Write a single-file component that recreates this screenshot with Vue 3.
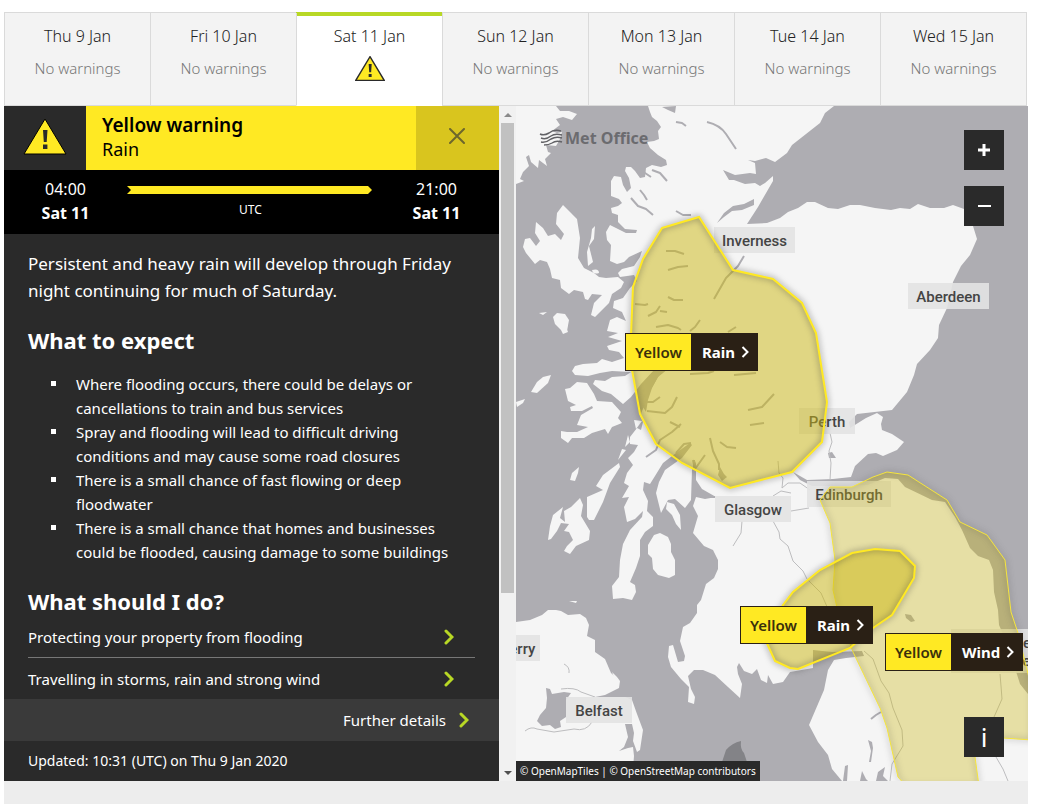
<!-- WarningsView.vue -->
<template>
  <div class="page">
    <nav class="tabs">
      <button
        v-for="(day, i) in days"
        :key="day"
        type="button"
        class="tab"
        :class="{ active: i === activeDay }"
        @click="activeDay = i"
      >
        <span class="tab-date">{{ day }}</span>
        <svg v-if="i === 2" class="tab-icon" viewBox="0 0 44 37">
          <path d="M22 1 L43 36 H1 Z" fill="#ffe923" stroke="#2a2a2a" stroke-width="2" />
          <path d="M20 12h4.500l-.8 12h-2.900z M20 26.500h4.400v4.500h-4.400z" fill="#2a2a2a" />
        </svg>
        <span v-else class="tab-status">No warnings</span>
      </button>
    </nav>

    <main class="content">
      <section class="panel">
        <header class="panel-head">
          <div class="head-icon">
            <svg viewBox="0 0 44 37" width="44" height="37">
              <path d="M22 1 L43 36 H1 Z" fill="#ffe923" stroke="#000" stroke-width="1" />
              <path d="M20 12h4.500l-.8 12h-2.900z M20 26.500h4.400v4.500h-4.400z" fill="#2a2a2a" />
            </svg>
          </div>
          <div class="head-title">
            <h1>Yellow warning</h1>
            <p>Rain</p>
          </div>
          <button type="button" class="close" aria-label="Close">
            <svg viewBox="0 0 16 16" width="16" height="16">
              <path d="M1 1 L15 15 M15 1 L1 15" stroke="#6d672c" stroke-width="2" stroke-linecap="round" />
            </svg>
          </button>
        </header>

        <div class="times">
          <p class="time">04:00<br><strong>Sat 11</strong></p>
          <div class="duration">
            <div class="arrow"></div>
            <span>UTC</span>
          </div>
          <p class="time">21:00<br><strong>Sat 11</strong></p>
        </div>

        <div class="details">
          <p class="summary">
            Persistent and heavy rain will develop through Friday night continuing for much of Saturday.
          </p>
          <h2>What to expect</h2>
          <ul class="impacts">
            <li v-for="impact in impacts" :key="impact">{{ impact }}</li>
          </ul>
          <h2>What should I do?</h2>
          <a v-for="link in links" :key="link" href="#" class="advice">
            {{ link }}
            <svg viewBox="0 0 10 16" width="10" height="16">
              <path d="M2 2 L8 8 L2 14" class="chevron" />
            </svg>
          </a>
        </div>

        <a href="#" class="further">
          Further details
          <svg viewBox="0 0 10 16" width="10" height="16">
            <path d="M2 2 L8 8 L2 14" class="chevron" />
          </svg>
        </a>
        <p class="updated">Updated: 10:31 (UTC) on Thu 9 Jan 2020</p>
      </section>

      <div class="scrollbar">
        <span class="scroll-up"></span>
        <span class="scroll-thumb"></span>
        <span class="scroll-down"></span>
      </div>

      <section class="map">
        <svg class="map-svg" viewBox="516 106 512 675" preserveAspectRatio="xMinYMin slice">
          <rect x="516" y="106" width="512" height="675" fill="#aeadb2" />
          <path v-for="(d, i) in land" :key="'land' + i" :d="d" fill="#f5f5f5" />
          <path v-for="(d, i) in water" :key="'water' + i" :d="d" fill="#aeadb2" />
          <path v-for="(d, i) in lochs" :key="'loch' + i" :d="d" class="loch" />
          <path v-for="(d, i) in roads" :key="'road' + i" :d="d" class="road" />
          <path d="M722 762 L726 750 Q732 743 741 741 Q740 749 744 753 L747 762 Z" fill="#838387" />

          <!-- logo -->
          <g class="logo-waves">
            <path d="M540 134 q4 2 9 -1 q5 -4 12 -2" />
            <path d="M541 138 q5 2 10 -2 q4 -3 11 -1" />
            <path d="M541 142 q5 1 10 -3 q5 -3 11 -1" />
            <path d="M544 145 q5 0 8 -2 q4 -3 10 -1" />
          </g>
          <text x="565" y="144" class="logo-text">Met Office</text>

          <g v-for="place in places" :key="place.lines[0]">
            <rect :x="place.x" :y="place.y" :width="place.w" :height="8 + place.lines.length * 18" class="place-box" />
            <text
              v-for="(line, i) in place.lines"
              :key="line"
              :x="place.x + place.w / 2"
              :y="place.y + 19 + i * 18"
              class="place-name"
            >{{ line }}</text>
          </g>

          <g v-for="area in areas" :key="area.id">
            <path :d="area.d" class="area-fill" :class="area.id" />
            <path :d="area.d" class="area-line" :class="area.id" />
          </g>
        </svg>

        <button
          v-for="pin in pins"
          :key="pin.id"
          type="button"
          class="pin"
          :class="pin.id"
        >
          <span class="pin-level">Yellow</span>
          <span class="pin-type">
            {{ pin.type }}
            <svg viewBox="0 0 8 12" width="8" height="12">
              <path d="M1.500 1 L6.500 6 L1.500 11" fill="none" stroke="#fff" stroke-width="2" />
            </svg>
          </span>
        </button>

        <div class="zoom">
          <button type="button" class="control" aria-label="Zoom in">
            <svg viewBox="0 0 14 14" width="14" height="14">
              <path d="M7 1 V13 M1 7 H13" stroke="#fff" stroke-width="3" />
            </svg>
          </button>
          <button type="button" class="control" aria-label="Zoom out">
            <svg viewBox="0 0 14 14" width="14" height="14">
              <path d="M1 7 H14" stroke="#fff" stroke-width="2" />
            </svg>
          </button>
        </div>
        <button type="button" class="control info">i</button>
        <p class="attribution">© OpenMapTiles | © OpenStreetMap contributors</p>
      </section>
    </main>
    <div class="page-foot"></div>
  </div>
</template>

<script setup>
import { ref } from 'vue'

const activeDay = ref(2)

const days = ['Thu 9 Jan', 'Fri 10 Jan', 'Sat 11 Jan', 'Sun 12 Jan', 'Mon 13 Jan', 'Tue 14 Jan', 'Wed 15 Jan']

const impacts = [
  'Where flooding occurs, there could be delays or cancellations to train and bus services',
  'Spray and flooding will lead to difficult driving conditions and may cause some road closures',
  'There is a small chance of fast flowing or deep floodwater',
  'There is a small chance that homes and businesses could be flooded, causing damage to some buildings',
]

const links = ['Protecting your property from flooding', 'Travelling in storms, rain and strong wind']

const pins = [
  { id: 'rain-north', type: 'Rain' },
  { id: 'rain-south', type: 'Rain' },
  { id: 'wind-east', type: 'Wind' },
]

const places = [
  { lines: ['Inverness'], x: 714, y: 227, w: 81 },
  { lines: ['Aberdeen'], x: 908, y: 283, w: 81 },
  { lines: ['Perth'], x: 799, y: 408, w: 56 },
  { lines: ['Edinburgh'], x: 807, y: 481, w: 84 },
  { lines: ['Glasgow'], x: 715, y: 496, w: 76 },
  { lines: ['Derry'], x: 495, y: 635, w: 45 },
  { lines: ['Belfast'], x: 566, y: 697, w: 66 },
  { lines: ['Newcastle', 'upon Tyne'], x: 951, y: 629, w: 90 },
]

// coastlines
const land = [
  // mainland
  `M648 106 L650 112 L652 117 L657 121 L661 127 L658 131 L659 139 L654 141 L647 142 L650 148 L658 155 L666 160 L667 165
   L661 167 L652 165 L646 168 L645 177 L640 178 L635 171 L631 167 L626 167 L625 171 L629 178 L631 188 L627 192 L623 185
   L621 177 L614 176 L611 181 L611 196 L619 199 L622 203 L618 206 L611 208 L612 213 L618 215 L618 222 L625 229 L637 230
   L636 233 L626 233 L616 228 L610 225 L606 232 L607 240 L611 245 L610 261 L617 264 L624 262 L629 257 L642 251 L640 257
   L634 266 L622 269 L618 273 L620 277 L634 275 L637 281 L630 288 L623 298 L614 301 L613 308 L622 312 L626 321 L617 317
   L610 320 L607 331 L618 333 L608 337 L622 341 L607 346 L609 350 L619 352 L624 358 L612 362 L602 359 L597 363 L583 364
   L575 366 L572 371 L575 375 L588 376 L600 373 L612 371 L631 372 L625 376 L612 377 L605 381 L595 380 L593 384 L602 391
   L611 394 L617 399 L623 404 L631 397 L641 384 L654 370 L665 365 L668 369 L658 377 L650 391 L645 404 L640 416 L643 422
   L641 430 L637 428 L630 437 L630 444 L638 445 L634 452 L628 458 L633 465 L627 473 L624 483 L629 486 L622 498 L629 497
   L624 507 L627 522 L635 519 L643 511 L642 517 L630 530 L623 544 L620 560 L619 577 L612 586 L613 599 L623 598 L632 600
   L636 592 L635 585 L630 582 L636 568 L640 556 L640 540 L645 532 L653 526 L653 517 L647 511 L648 501 L643 490 L644 482
   L650 484 L655 476 L663 463 L676 453 L690 443 L692 445 L682 458 L665 470 L659 482 L656 493 L661 513 L668 500 L675 499
   L685 508 L691 500 L692 470 L696 461 L696 480 L702 489 L716 497 L705 499 L696 497 L693 506 L698 516 L693 533 L704 546
   L713 550 L718 560 L718 569 L714 578 L706 584 L701 600 L697 605 L697 613 L690 623 L683 627 L680 641 L685 656 L684 661
   L678 662 L673 645 L669 646 L668 657 L671 667 L681 679 L689 687 L688 702 L694 704 L695 697 L691 689 L688 676 L694 670
   L703 670 L715 675 L728 687 L740 698 L742 684 L738 674 L737 667 L739 663 L744 671 L752 674 L757 669 L761 680 L767 683
   L768 675 L773 684 L783 682 L790 672 L813 668 L813 650 L832 652 L862 651 L864 656 L846 658 L834 660 L828 670 L824 690
   L809 725 L818 742 L828 755 L832 769 L842 781 L1028 781 L1028 694 L1020 684 L1014 665 L1006 641 L999 625 L998 610 L994 592
   L993 570 L989 560 L978 556 L970 548 L962 530 L955 517 L945 502 L932 500 L905 487 L898 479 L885 478 L868 485 L845 486
   L812 486 L800 480 L793 472 L807 480 L833 479 L851 477 L855 466 L868 454 L876 453 L883 456 L897 450 L904 442 L892 434
   L882 430 L881 424 L883 417 L877 413 L866 418 L850 428 L849 422 L857 414 L892 410 L907 392 L914 375 L917 364 L930 350
   L938 338 L939 325 L947 308 L953 282 L961 266 L970 255 L977 239 L973 226 L964 209 L953 205 L944 208 L930 208 L918 204
   L910 209 L900 208 L891 210 L875 208 L860 205 L850 205 L838 209 L828 208 L815 202 L807 202 L798 208 L788 212 L780 218
   L767 223 L747 224 L758 207 L773 181 L773 176 L765 183 L760 186 L755 183 L745 184 L734 180 L729 180 L723 170 L735 175
   L750 173 L756 174 L755 163 L748 160 L755 161 L766 158 L775 162 L787 153 L792 145 L820 123 L825 113 L834 106 Z`,
  // lewis and harris
  `M516 106 H556 L560 111 L569 111 L577 114 L572 120 L563 117 L556 119 L560 125 L552 131 L557 133 L562 132 L560 139
   L556 146 L546 145 L548 152 L551 153 L545 159 L547 166 L539 160 L538 168 L531 162 L529 155 L526 157 L529 166 L523 172
   L520 179 L524 181 L516 184 Z`,
  // skye
  `M557 213 L563 205 L571 213 L577 219 L580 238 L578 258 L584 268 L594 273 L599 277 L606 278 L618 277 L624 282 L621 288
   L612 294 L609 303 L595 317 L591 315 L594 303 L602 295 L592 294 L588 300 L585 299 L583 292 L574 290 L569 294 L561 288
   L560 280 L552 278 L550 269 L547 262 L540 260 L535 264 L526 253 L523 247 L525 239 L530 238 L536 246 L540 241 L535 233
   L536 222 L543 228 L548 236 L555 234 L561 240 L564 234 L556 224 Z`,
  'M595 226 L594 239 L589 246 L593 262 L588 266 L587 252 L591 238 L592 229 Z',
  'M592 270 Q599 268 599 273 Q593 275 592 270 Z',
  'M553 317 L557 313 L565 314 L569 320 L567 331 L561 330 L555 324 Z',
  'M539 313 L547 312 L543 315 Z M561 330 L566 327 L568 332 L563 334 Z',
  // mull
  `M565 389 L570 388 L577 382 L587 383 L594 394 L597 401 L612 402 L621 412 L618 418 L622 423 L612 427 L608 434 L605 429
   L592 433 L584 438 L572 438 L568 443 L561 438 L561 431 L567 432 L577 432 L588 427 L577 425 L581 415 L593 408 L592 406
   L582 411 L571 411 L570 407 L576 405 L568 401 Z`,
  'M531 392 L537 382 L543 377 L551 375 L548 383 L537 393 Z',
  'M516 402 L525 399 L523 403 L517 407 Z',
  'M570 480 L572 473 L579 467 L578 473 L575 481 Z',
  // jura
  'M587 517 L587 497 L603 490 L596 486 L603 475 L619 463 L620 467 L610 483 L603 502 L594 520 L589 520 Z',
  // islay
  `M548 540 L550 526 L553 515 L563 507 L560 518 L565 522 L564 511 L571 507 L580 498 L583 505 L581 516 L590 531 L589 540
   L576 546 L570 554 L564 551 L567 546 L573 540 L569 532 L564 531 L569 524 L561 523 L557 531 L551 539 Z`,
  // arran and bute
  'M648 545 L654 535 L660 533 L668 537 L671 544 L671 552 L675 560 L675 575 L669 578 L658 575 L653 569 L652 558 L648 554 Z',
  'M667 502 L674 504 L680 515 L681 530 L676 524 L672 515 L666 509 Z',
  'M628 435 L630 442 L625 447 Z M622 449 L626 450 L618 460 Z M634 420 L642 421 L636 429 Z',
  // northern ireland
  `M516 622 L530 620 L542 615 L548 610 L556 610 L561 611 L568 615 L580 614 L586 618 L589 625 L587 636 L595 640 L595 652
   L605 659 L611 673 L620 681 L619 688 L605 695 L595 697 L625 697 L632 700 L637 714 L643 730 L640 750 L637 752 L633 741
   L634 733 L632 724 L625 724 L628 737 L624 747 L619 751 L628 748 L633 747 L634 756 L632 781 L516 781 Z`,
  'M612 672 L617 677 L620 681 L614 677 Z',
  'M569 601 L577 601 L576 603 Z',
]

// lakes and firths cut out of the land
const water = [
  'M546 688 L550 689 L552 694 L564 692 L571 693 L566 700 L566 717 L560 721 L561 727 L555 729 L550 725 L542 726 L537 721 L540 715 L546 708 L547 698 Z',
  'M717 223 L724 213 L733 206 L744 204 L754 199 L754 205 L742 210 L732 211 L724 217 Z',
  'M828 453 L832 452 L836 458 L829 458 Z',
  'M718 475 L720 467 L724 474 L727 477 L722 481 Z',
  'M905 614 L911 615 L915 621 L911 622 L906 618 Z',
  'M843 781 L845 766 L848 765 L847 781 Z M860 781 L862 771 L866 779 L868 781 Z M876 781 L878 772 L885 767 L883 776 L888 781 Z',
  'M868 740 L872 742 L873 748 L871 762 L869 762 L871 751 Z',
  'M640 402 L648 378 L659 366 L666 366 L658 377 L652 388 L648 400 L646 412 Z',
  'M662 107 L676 106 L675 113 L668 110 Z',
]

const lochs = [
  'M707 122 Q720 125 726 134 T736 149',
  'M676 122 l6 1 l4 3',
  'M639 167 l6 6 l6 4 M652 170 l8 3 l7 8',
  'M631 198 l7 8 l8 3 l7 6 M640 190 l4 5 l3 5',
  'M676 211 l7 4 h8',
  'M744 256 L738 266 L726 278 L714 299',
  'M666 251 l9 0 l9 3 M668 270 l10 -3 l10 -1',
  'M668 297 l6 3 h9 M635 304 l10 1 l3 -1',
  'M648 316 l8 -4 l4 -6 M660 311 l7 1',
  'M656 327 l12 -2 l10 3 l3 2 M690 331 l5 -4 l5 -7 M728 332 l8 -5',
  'M666 366 Q678 358 690 354 M690 374 l18 -1 l6 -2 M734 375 l22 -2',
  'M647 411 l18 2 l7 -6 l5 -10 M647 402 l6 0 l7 -5',
  'M646 457 l10 -7 l4 -10 l12 -8 l9 -8 M670 422 l10 5',
  'M676 453 l8 -9 l7 -1 M693 460 l2 9 l10 -14',
  'M710 438 l3 13 l6 13 l0 6 M720 442 l7 5 l9 1',
  'M748 410 l14 -3 l12 -13 M750 425 l14 -2',
  'M694 460 V494 M695 488 q10 10 20 9',
  'M871 719 l5 -4 l5 -3',
]

const roads = [
  'M778 461 l1 12 l4 5 l-1 10 l6 -5 l12 0 l10 7',
  'M830 433 l2 9 l-3 9 l2 12 l-1 17',
  'M791 493 l-10 -2 l-8 5 M791 511 l18 -3',
  'M742 521 l-1 12 l-8 13 M773 521 l6 11 l1 7 l8 7 l5 15 l10 10 l4 8 l14 14 l7 16',
  'M864 651 l9 8 l8 22 l8 12 l4 15 l9 22 l1 16 l-11 18 l-2 17',
  'M1000 674 l1 12 l1 13 l-8 18 M996 757 l7 12 l5 12',
  'M561 689 q14 -2 20 3 l14 5 M564 664 q6 3 5 9',
  'M525 731 q6 -5 12 -2 l17 3 l20 -3 q12 3 18 -7',
]

const areas = [
  {
    id: 'wind',
    d: `M820 500 L830 487 L852 487 L873 477 L887 472 L908 475 L947 500 L960 522 L987 535 L1005 560 L1011 612 L1018 633
        L1032 690 L1032 740 L1003 738 L975 738 L975 757 L979 786 L906 786 L898 777 L887 728 L880 708 L853 652 L838 612
        L833 590 L835 560 L830 523 Z`,
  },
  {
    id: 'north',
    d: `M662 228 L699 217 L733 270 L773 279 L802 303 L816 333 L827 402 L822 442 L792 472 L730 488 L682 463 L656 444
        L640 414 L632 370 L631 335 L633 287 L643 259 Z`,
  },
  {
    id: 'south',
    d: `M852 553 L875 549 L900 551 L915 566 L914 578 L892 615 L873 628 L850 648 L798 669 L790 668 L775 661 L765 639
        L783 605 L793 592 L820 570 Z`,
  },
]
</script>

<style>
body {
  margin: 0;
  background: #fff;
}
</style>

<style scoped>
* {
  box-sizing: border-box;
}

.page {
  display: flex;
  flex-direction: column;
  min-height: 100vh;
  padding: 12px 35px 0 4px;
  font-family: "Noto Sans", "Open Sans", sans-serif;
  font-size: 15px;
  line-height: 24px;
}

h1, h2, p, ul {
  margin: 0;
}

button {
  border: 0;
  padding: 0;
  font: inherit;
  cursor: pointer;
}

a {
  color: #fff;
  text-decoration: none;
}

/* day tabs */
.tabs {
  display: flex;
  border: 1px solid #dadada;
  border-width: 1px 1px 0 1px;
  margin-right: 1px;
}

.tab {
  flex: 1;
  display: flex;
  flex-direction: column;
  align-items: center;
  gap: 8px;
  height: 93px;
  padding-top: 11px;
  background: #f3f3f3;
  border-bottom: 1px solid #dadada;
  border-left: 1px solid #dadada;
  font-weight: 300;
}

.tab:first-child {
  border-left: 0;
}

.tab.active {
  background: #fff;
  border-bottom-color: #fff;
  box-shadow: inset 0 3px #b8d825, 0 -1px #b8d825;
}

.tab-date {
  color: #222;
  font-size: 16px;
}

.tab-status {
  color: #777;
}

.tab-icon {
  width: 30px;
  height: 25px;
}

/* layout */
.content {
  display: flex;
}

.panel {
  flex: 495 1 0;
  background: #2a2a2a;
  color: #fff;
}

.map {
  flex: 512 1 0;
  position: relative;
  overflow: hidden;
}

.page-foot {
  flex: 1;
  background: #ededed;
}

/* warning panel */
.panel-head {
  display: flex;
  height: 64px;
  background: #ffe923;
  color: #000;
}

.head-icon {
  display: flex;
  align-items: center;
  justify-content: center;
  width: 82px;
  padding-bottom: 4px;
  background: #2a2a2a;
}

.head-title {
  flex: 1;
  padding: 7px 16px;
  font-size: 18px;
}

.head-title h1 {
  font-size: 19px;
  font-weight: 600;
  line-height: 24px;
}

.close {
  display: flex;
  align-items: center;
  justify-content: center;
  width: 83px;
  padding: 0 2px 4px 0;
  background: #d9c51e;
}

.times {
  display: grid;
  grid-template-columns: 123px 1fr 125px;
  height: 64px;
  padding-top: 7px;
  background: #000;
  font-size: 16px;
  text-align: center;
}

.duration {
  font-size: 12px;
}

.arrow {
  height: 8px;
  margin: 9px 2px 4px 0;
  background: #ffe923;
  clip-path: polygon(0 0, calc(100% - 4px) 0, 100% 50%, calc(100% - 4px) 100%, 0 100%, 4px 50%);
}

.details {
  padding: 16px 24px 0;
}

.summary {
  font-size: 17px;
  line-height: 27px;
}

h2 {
  margin-top: 21px;
  font-size: 22px;
  font-weight: 700;
  line-height: 30px;
}

.impacts {
  margin-top: 17px;
  padding: 0 16px 0 23px;
  list-style: none;
}

.impacts li {
  display: flex;
  gap: 20px;
}

.impacts li::before {
  content: "";
  flex: none;
  width: 5px;
  height: 5px;
  margin-top: 9px;
  background: #fff;
}

.impacts + h2 {
  margin-top: 22px;
}

.advice {
  display: flex;
  align-items: center;
  justify-content: space-between;
  height: 41px;
  padding-right: 21px;
}

.advice + .advice {
  height: 42px;
  border-top: 1px solid #777;
}

.chevron {
  fill: none;
  stroke: #b8d825;
  stroke-width: 3;
  stroke-linecap: round;
}

.further {
  display: flex;
  align-items: center;
  justify-content: flex-end;
  gap: 13px;
  height: 42px;
  padding-right: 30px;
  background: #3a3a3a;
}

.updated {
  height: 40px;
  padding: 8px 24px;
  font-size: 14px;
}

/* scrollbar */
.scrollbar {
  display: flex;
  flex-direction: column;
  align-items: center;
  width: 17px;
  padding: 6px 2px;
  background: #f1f1f1;
}

.scroll-up {
  border: 4px solid transparent;
  border-bottom-color: #8a8a8a;
  border-top: 0;
  margin: 1px 0 6px;
}

.scroll-thumb {
  width: 100%;
  flex: 470 1 0;
  background: #c1c1c1;
}

.scroll-down {
  display: flex;
  align-items: flex-end;
  flex: 182 1 0;
}

.scroll-down::after {
  content: "";
  border: 4px solid transparent;
  border-top-color: #505050;
  border-bottom: 0;
}

/* map */
.map-svg {
  position: absolute;
  inset: 0;
  width: 100%;
  height: 100%;
}

.loch {
  fill: none;
  stroke: #aeadb2;
  stroke-width: 2;
  stroke-linejoin: round;
}

.road {
  fill: none;
  stroke: #bdbdbf;
  stroke-width: 1;
}

.logo-waves path {
  fill: none;
  stroke: #626266;
  stroke-width: 1.500;
}

.logo-text {
  fill: #6b6b6f;
  font-family: "Noto Sans", sans-serif;
  font-size: 16px;
  font-weight: 700;
}

.place-box {
  fill: #e3e3e3;
  fill-opacity: 0.9;
}

.place-name {
  fill: #444;
  font-family: Roboto, sans-serif;
  font-size: 15px;
  font-weight: 500;
  text-anchor: middle;
}

.area-fill {
  fill: rgb(203, 183, 18);
  fill-opacity: 0.5;
}

.area-fill.wind {
  fill-opacity: 0.35;
}

.area-line {
  fill: none;
  stroke: #ffe923;
  stroke-width: 2;
  filter: drop-shadow(0 0 3px rgba(40, 40, 40, 0.7));
}

.area-line.wind {
  stroke: #f5e53c;
  stroke-width: 1;
}

.pin {
  position: absolute;
  display: flex;
  height: 38px;
  border: 1px solid #2a2015;
  background: #2a2015;
  color: #fff;
  font-weight: 600;
  line-height: 36px;
}

.pin-level {
  width: 65px;
  background: #ffe923;
  color: #3a300c;
}

.pin-type {
  display: flex;
  align-items: center;
  gap: 6px;
  padding: 0 8px 0 11px;
  font-weight: 700;
}

.rain-north {
  left: 109px;
  top: 227px;
}

.rain-south {
  left: 224px;
  top: 500px;
}

.wind-east {
  left: 369px;
  top: 527px;
}

.zoom {
  position: absolute;
  top: 24px;
  right: 24px;
  display: flex;
  flex-direction: column;
  gap: 16px;
}

.control {
  display: flex;
  align-items: center;
  justify-content: center;
  width: 40px;
  height: 40px;
  background: #2a2a2a;
  color: #fff;
}

.info {
  position: absolute;
  right: 24px;
  bottom: 24px;
  font-size: 26px;
}

.attribution {
  position: absolute;
  left: 0;
  bottom: 0;
  padding: 0 4px;
  background: #2a2a2a;
  color: #fff;
  font-size: 10px;
  line-height: 20px;
}
</style>
